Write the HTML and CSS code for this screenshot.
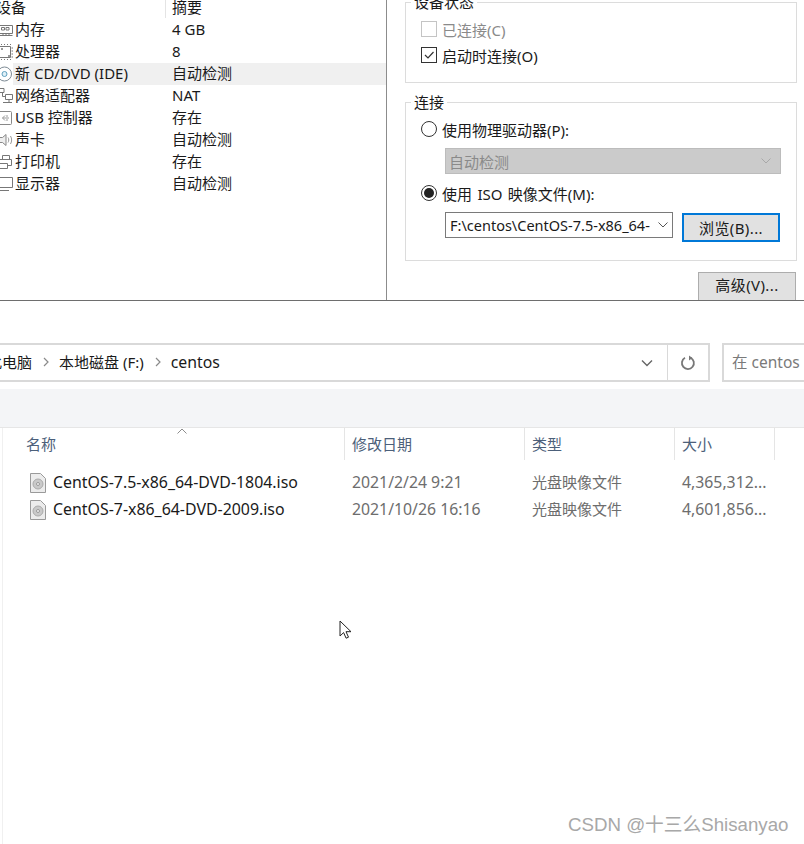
FILE: index.html
```html
<!DOCTYPE html>
<html lang="en">
<head>
  <meta charset="UTF-8">
  <title>CentOS ISO</title>
  <link rel="stylesheet" href="styles.css">
</head>
<body>
  <div class="vm">
    <div class="devices">
      <div class="dev-head">
        <div class="dev-head-name">设备</div>
        <div class="dev-head-value">摘要</div>
      </div>
      <div class="dev-row">
        <svg class="dev-icon" viewBox="0 0 13 16"><path d="M0 3.500h12.500v8H0M1.500 5.500h3v2.500h-3zM6 5.500h3v2.500H6zM0 13.500h12.500M3 11.500v2M6 11.500v2M9 11.500v2" fill="none" stroke="#777"/></svg>
        <div class="dev-body"><span class="dev-name">内存</span><span>4 GB</span></div>
      </div>
      <div class="dev-row">
        <svg class="dev-icon" viewBox="0 0 13 16"><path d="M0 2.500h10.500v11H0M1 .5h1M4 .5h1M7 .5h1M10 .5h1M1 15.500h1M4 15.500h1M7 15.500h1M10 15.500h1M11.500 4H13M11.500 7H13M11.500 10H13M11.500 13H13" fill="none" stroke="#777"/><path d="M1 4h2v2H1zM8 11h2v2H8z" fill="#999"/></svg>
        <div class="dev-body"><span class="dev-name">处理器</span><span>8</span></div>
      </div>
      <div class="dev-row selected">
        <svg class="dev-icon" viewBox="0 0 13 16"><circle cx="4.500" cy="8" r="7" fill="#fff" stroke="#7d8a94"/><circle cx="4.500" cy="8" r="2.500" fill="#dff0f8" stroke="#5f9fbe"/></svg>
        <div class="dev-body"><span class="dev-name">新 CD/DVD (IDE)</span><span>自动检测</span></div>
      </div>
      <div class="dev-row">
        <svg class="dev-icon" viewBox="0 0 13 16"><path d="M0 .5h4v4H0M5.500 6.500h7v5h-7zM2.500 4.500v4h3M9 11.500v3M3 14.500h9" fill="none" stroke="#777"/></svg>
        <div class="dev-body"><span class="dev-name">网络适配器</span><span>NAT</span></div>
      </div>
      <div class="dev-row">
        <svg class="dev-icon" viewBox="0 0 13 16"><path d="M0 1.500h10.500a1 1 0 0 1 1 1v11a1 1 0 0 1-1 1H0" fill="none" stroke="#888"/><path d="M9 8H2.500M5 5.500 2.500 8 5 10.500M6 6h2M6 10h2" fill="none" stroke="#999"/></svg>
        <div class="dev-body"><span class="dev-name">USB 控制器</span><span>存在</span></div>
      </div>
      <div class="dev-row">
        <svg class="dev-icon" viewBox="0 0 13 16"><path d="M0 5.500h2.500L6 2.500v11l-3.500-3H0" fill="#eee" stroke="#888"/><path d="M8 5.500c1 1.500 1 3.500 0 5M10.500 4c1.500 2.500 1.500 5.500 0 8" fill="none" stroke="#999"/></svg>
        <div class="dev-body"><span class="dev-name">声卡</span><span>自动检测</span></div>
      </div>
      <div class="dev-row">
        <svg class="dev-icon" viewBox="0 0 13 16"><path d="M2.500 5V1.500h7V5M0 5.500h11.500v6H8M0 9.500h7.500v5H0" fill="none" stroke="#777"/></svg>
        <div class="dev-body"><span class="dev-name">打印机</span><span>存在</span></div>
      </div>
      <div class="dev-row">
        <svg class="dev-icon" viewBox="0 0 13 16"><path d="M0 1.500h12.500v10H0M0 14.500h9" fill="none" stroke="#777"/></svg>
        <div class="dev-body"><span class="dev-name">显示器</span><span>自动检测</span></div>
      </div>
    </div>

    <div class="settings">
      <fieldset class="group status">
        <legend>设备状态</legend>
        <div class="opt disabled"><span class="check"></span>已连接(C)</div>
        <div class="opt">
          <span class="check on"><svg viewBox="0 0 14 14"><path d="M3 7l3 3 5.500-6" fill="none" stroke="#333" stroke-width="1.200"/></svg></span>启动时连接(O)
        </div>
      </fieldset>

      <fieldset class="group connect">
        <legend>连接</legend>
        <div class="opt"><span class="radio"></span>使用物理驱动器(P):</div>
        <div class="select">
          <span>自动检测</span>
          <svg class="chev" viewBox="0 0 10 6"><path d="M.5.500 5 5 9.500.5" fill="none" stroke="#a8a8a8"/></svg>
        </div>
        <div class="opt iso-opt"><span class="radio on"></span>使用 ISO 映像文件(M):</div>
        <div class="iso-row">
          <div class="combo">
            <span class="combo-text">F:\centos\CentOS-7.5-x86_64-</span>
            <svg class="chev" viewBox="0 0 10 6"><path d="M.5.500 5 5 9.500.5" fill="none" stroke="#555"/></svg>
          </div>
          <div class="btn browse">浏览(B)...</div>
        </div>
      </fieldset>

      <div class="btn advanced">高级(V)...</div>
    </div>
  </div>

  <div class="explorer">
    <div class="nav">
      <div class="address">
        <div class="crumbs">
          <span class="crumb-first">此电脑</span>
          <svg class="crumb-sep" viewBox="0 0 6 10"><path d="M1 1l4 4-4 4" fill="none" stroke="#8a8a8a" stroke-width="1.200"/></svg>
          <span>本地磁盘 (F:)</span>
          <svg class="crumb-sep" viewBox="0 0 6 10"><path d="M1 1l4 4-4 4" fill="none" stroke="#8a8a8a" stroke-width="1.200"/></svg>
          <span class="crumb-last">centos</span>
        </div>
        <div class="addr-drop">
          <svg viewBox="0 0 12 8"><path d="M1 1.500l5 5 5-5" fill="none" stroke="#666" stroke-width="1.400"/></svg>
        </div>
        <div class="addr-refresh">
          <svg viewBox="0 0 16 16"><path d="M10.600 2.700a6 6 0 1 1-5.600.1" fill="none" stroke="#777" stroke-width="1.800"/><path d="M9 .5v5l3.500-2.500z" fill="#777"/></svg>
        </div>
      </div>
      <div class="search">在 centos</div>
    </div>
    <div class="band"></div>
    <div class="file-area">
      <div class="sort-caret">
        <svg viewBox="0 0 10 6"><path d="M.5 5.500 5 1l4.500 4.500" fill="none" stroke="#8d8d8d"/></svg>
      </div>
      <div class="columns head">
        <div class="col">名称</div>
        <div class="col">修改日期</div>
        <div class="col">类型</div>
        <div class="col">大小</div>
      </div>
      <div class="columns file">
        <div class="col name">
          <svg class="iso" viewBox="0 0 16 20"><path d="M.5.500h10l5 5v14H.5z" fill="#ececec" stroke="#9a9a9a"/><circle cx="8" cy="11" r="5" fill="#c9c9c9" stroke="#aaa"/><circle cx="8" cy="11" r="1.500" fill="#f4f4f4" stroke="#999"/></svg>
          CentOS-7.5-x86_64-DVD-1804.iso
        </div>
        <div class="col">2021/2/24 9:21</div>
        <div class="col type">光盘映像文件</div>
        <div class="col">4,365,312...</div>
      </div>
      <div class="columns file">
        <div class="col name">
          <svg class="iso" viewBox="0 0 16 20"><path d="M.5.500h10l5 5v14H.5z" fill="#ececec" stroke="#9a9a9a"/><circle cx="8" cy="11" r="5" fill="#c9c9c9" stroke="#aaa"/><circle cx="8" cy="11" r="1.500" fill="#f4f4f4" stroke="#999"/></svg>
          CentOS-7-x86_64-DVD-2009.iso
        </div>
        <div class="col">2021/10/26 16:16</div>
        <div class="col type">光盘映像文件</div>
        <div class="col">4,601,856...</div>
      </div>
    </div>
  </div>

  <svg class="cursor" viewBox="0 0 14 20"><path d="M1 1v15l3.600-3.400 2.500 5.600 2.400-1-2.500-5.500h5z" fill="#fff" stroke="#222"/></svg>
  <div class="watermark">CSDN @十三么Shisanyao</div>
</body>
</html>
```

FILE: styles.css
```css
html, body {
  margin: 0;
  height: 844px;
  overflow: hidden;
}

body {
  position: relative;
  background: #fff;
  color: #1a1a1a;
  font-family: "Noto Sans", "Noto Sans CJK SC", sans-serif;
  font-size: 15px;
}

/* top part: vm settings dialog */
.vm {
  display: flex;
  height: 300px;
  border-bottom: 1px solid #6e6e6e;
  overflow: hidden;
}

.devices {
  width: 386px;
  border-right: 1px solid #8c8c8c;
  flex-shrink: 0;
}

.dev-head {
  display: flex;
  height: 19px;
  line-height: 15px;
}

.dev-head-name {
  width: 169px;
  margin-left: -4px;
  border-right: 1px solid #e4e4e4;
  height: 18px;
}

.dev-head-value {
  padding-left: 6px;
}

.dev-row {
  display: flex;
  height: 22px;
  line-height: 20px;
}

.dev-icon {
  width: 13px;
  height: 16px;
  margin-top: 3px;
  flex-shrink: 0;
}

.dev-body {
  display: flex;
  flex: 1;
  padding-left: 2px;
}

.dev-name {
  width: 157px;
}

.selected .dev-body {
  background: #f0f0f0;
}

.settings {
  flex: 1;
  display: flex;
  flex-direction: column;
  padding: 0 7px 0 18px;
}

.group {
  flex-shrink: 0;
  margin: 0;
  padding: 5px 15px 0;
  border: 1px solid #dcdcdc;
  min-width: 0;
}

.group legend {
  margin-left: -10px;
  padding: 0 3px;
  line-height: 20px;
}

.status {
  margin-top: -8px;
  padding-top: 4px;
  height: 85px;
}

.connect {
  margin-top: 9px;
  padding-top: 4px;
  height: 163px;
}

.opt {
  display: flex;
  align-items: center;
  height: 26px;
}

.iso-opt {
  word-spacing: 1.500px;
}

.disabled {
  color: #8a8a8a;
}

.check {
  width: 14px;
  height: 14px;
  margin-right: 5px;
  border: 1px solid #333;
  display: block;
}

.disabled .check {
  border-color: #c4c4c4;
}

.check svg {
  display: block;
}

.radio {
  width: 14px;
  height: 14px;
  margin-right: 5px;
  border: 1px solid #333;
  border-radius: 50%;
  position: relative;
}

.radio.on::after {
  content: "";
  position: absolute;
  top: 2px;
  left: 2px;
  width: 10px;
  height: 10px;
  border-radius: 50%;
  background: #222;
}

.select {
  display: flex;
  align-items: center;
  justify-content: space-between;
  height: 24px;
  margin: 6px 0 6px 24px;
  padding: 0 9px 0 3px;
  background: #cbcbcb;
  border: 1px solid #bcbcbc;
  color: #8a8a8a;
}

.chev {
  width: 10px;
  height: 6px;
}

.iso-row {
  display: flex;
  align-items: flex-start;
  margin: 6px 0 0 24px;
}

.combo {
  display: flex;
  align-items: center;
  justify-content: space-between;
  box-sizing: border-box;
  width: 228px;
  height: 26px;
  padding: 0 4px;
  border: 1px solid #7a7a7a;
  font-size: 14.500px;
}

.combo-text {
  width: 200px;
  overflow: hidden;
  white-space: nowrap;
}

.btn {
  box-sizing: border-box;
  display: flex;
  align-items: center;
  justify-content: center;
  width: 98px;
  background: #e1e1e1;
  letter-spacing: .4px;
}

.browse {
  height: 29px;
  margin: 1px 0 0 9px;
  border: 2px solid #0078d7;
}

.advanced {
  height: 34px;
  flex-shrink: 0;
  margin: 11px 1px 0 0;
  padding-bottom: 9px;
  align-self: flex-end;
  border: 1px solid #adadad;
}

/* bottom part: file explorer */
.explorer {
  padding-top: 42px;
}

.nav {
  display: flex;
  height: 39px;
}

.address {
  display: flex;
  box-sizing: border-box;
  width: 710px;
  border: 2px solid #d9d9d9;
  border-left: 0;
}

.crumbs {
  flex: 1;
  display: flex;
  align-items: center;
  padding-bottom: 2px;
}

.crumb-first {
  margin-left: -13px;
}

.crumb-last {
  font-size: 15.800px;
}

.crumb-sep {
  width: 6px;
  height: 10px;
  margin: 0 10px 0 11px;
}

.addr-drop, .addr-refresh {
  display: flex;
  align-items: center;
  justify-content: center;
  flex-shrink: 0;
}

.addr-drop {
  width: 41px;
  border-right: 1px solid #d9d9d9;
}

.addr-drop svg {
  width: 12px;
  height: 8px;
}

.addr-refresh {
  width: 40px;
}

.addr-refresh svg {
  width: 16px;
  height: 16px;
}

.search {
  box-sizing: border-box;
  margin-left: 12px;
  flex: 1;
  border: 2px solid #d9d9d9;
  border-right: 0;
  padding-left: 8px;
  color: #7a7a7a;
  line-height: 34px;
  white-space: nowrap;
  overflow: hidden;
  font-size: 15.500px;
}

.band {
  height: 38px;
  margin-top: 7px;
  background: #f4f5f7;
  border-bottom: 1px solid #e6e6e6;
}

.file-area {
  position: relative;
  margin-left: 2px;
  border-left: 1px solid #f0f0f0;
  height: 416px;
}

.sort-caret {
  position: absolute;
  top: 0;
  left: 174px;
  width: 10px;
}

.sort-caret svg {
  display: block;
  width: 10px;
  height: 6px;
}

.columns {
  display: grid;
  grid-template-columns: 342px 180px 150px 100px;
}

.head {
  height: 32px;
  color: #4c607a;
  line-height: 33px;
}

.head .col {
  box-sizing: border-box;
  height: 32px;
  padding-left: 7px;
  border-right: 1px solid #e5e5e5;
}

.head .col:first-child {
  padding-left: 23px;
}

.file {
  height: 27px;
  line-height: 27px;
  color: #6d6d6d;
  font-size: 15.800px;
}

.head + .file {
  margin-top: 9px;
}

.file .col {
  padding-left: 7px;
  white-space: nowrap;
}

.file .type {
  font-size: 15px;
}

.file .name {
  display: flex;
  align-items: center;
  gap: 7px;
  padding-left: 27px;
  color: #1a1a1a;
  font-size: 15.900px;
}

.iso {
  width: 16px;
  height: 20px;
  flex-shrink: 0;
}

/* things that sit on top */
.cursor {
  position: absolute;
  top: 620px;
  left: 339px;
  width: 14px;
  height: 20px;
}

.watermark {
  position: absolute;
  top: 813px;
  left: 568px;
  color: #a8a8a8;
  font-family: "Liberation Sans", "Noto Sans CJK SC", sans-serif;
  font-size: 18.700px;
  line-height: 24px;
  white-space: nowrap;
}
```
